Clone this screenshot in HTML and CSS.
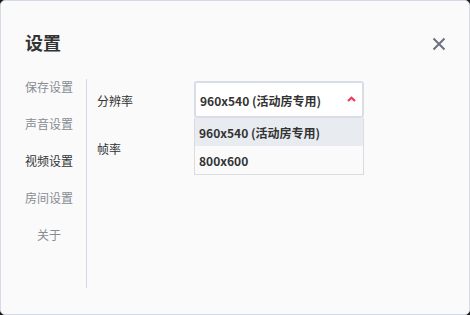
FILE: index.html
```html
<!DOCTYPE html>
<html lang="zh">
<head>
<meta charset="utf-8">
<link rel="stylesheet" href="styles.css">
</head>
<body>
<div class="window">
  <div class="header">
    <div class="title">设置</div>
    <svg class="close" width="14" height="14" viewBox="0 0 14 14"><path d="M1.5 1.5 L12.5 12.5 M12.5 1.5 L1.5 12.5" stroke="#6c717c" stroke-width="2" fill="none"/></svg>
  </div>
  <div class="body">
    <nav class="nav">
      <div class="nav-item">保存设置</div>
      <div class="nav-item">声音设置</div>
      <div class="nav-item active">视频设置</div>
      <div class="nav-item">房间设置</div>
      <div class="nav-item">关于</div>
    </nav>
    <div class="content">
      <div class="row">
        <div class="label">分辨率</div>
        <div class="select-wrap">
          <div class="select">
            <span>960x540 (活动房专用)</span>
            <svg class="caret" width="9" height="6" viewBox="0 0 9 6"><path d="M1 5 L4.5 1.8 L8 5" stroke="#f5365c" stroke-width="2.2" fill="none"/></svg>
          </div>
          <div class="dropdown">
            <div class="option selected">960x540 (活动房专用)</div>
            <div class="option">800x600</div>
          </div>
        </div>
      </div>
      <div class="row row-fps">
        <div class="label">帧率</div>
      </div>
    </div>
  </div>
</div>
</body>
</html>
```
FILE: styles.css
```css
* { box-sizing: border-box; }
html, body { margin: 0; padding: 0; background: #1a1a1a; }
body {
  width: 470px; height: 315px;
  font-family: "Noto Sans CJK SC", "Noto Sans", sans-serif;
}
.window {
  width: 470px; height: 315px;
  background: #fafafb;
  border: 1px solid #d6dae6;
  border-radius: 5px;
  display: flex; flex-direction: column;
}
.header {
  display: flex; justify-content: space-between;
  padding: 28px 23px 0 24px;
  height: 77px;
  align-items: flex-start;
}
.title {
  font-size: 18px; font-weight: 700; color: #333;
  line-height: 26px;
}
.close { margin-top: 8px; }
.body { display: flex; height: 210px; }
.nav {
  width: 86px;
  border-right: 1px solid #d2d8e6;
  display: flex; flex-direction: column; align-items: center;
  margin-top: 1px;
  gap: 13px;
  padding-left: 11px;
}
.nav-item {
  font-size: 12px; color: #888b92; line-height: 24px;
  margin-top: -4px;
}
.nav-item + .nav-item { margin-top: 0; }
.nav-item.active { color: #333; }
.content { flex: 1; padding: 3px 0 0 10px; position: relative; }
.row { display: flex; align-items: flex-start; }
.label { font-size: 12px; color: #333; width: 97px; line-height: 24px; margin-top: 8px; }
.row-fps { position: absolute; top: 51px; left: 10px; }
.select-wrap { position: relative; z-index: 2; }
.select {
  width: 170px; height: 37px;
  border: 2px solid #d9dde8;
  border-radius: 3px;
  background: #fff;
  display: flex; align-items: center; justify-content: space-between;
  padding: 1px 6px 0 4px;
  font-size: 12px; font-weight: 700; color: #333;
}
.caret { margin-right: 0; margin-top: -2px; }
.dropdown {
  width: 170px;
  border: 1px solid #dadbde;
  border-top: none;
  background: #fafafb;
}
.option {
  height: 28px; line-height: 29px;
  padding-left: 4px;
  font-size: 12px; font-weight: 700; color: #333;
}
.option.selected { background: #e8ebf0; }
```
